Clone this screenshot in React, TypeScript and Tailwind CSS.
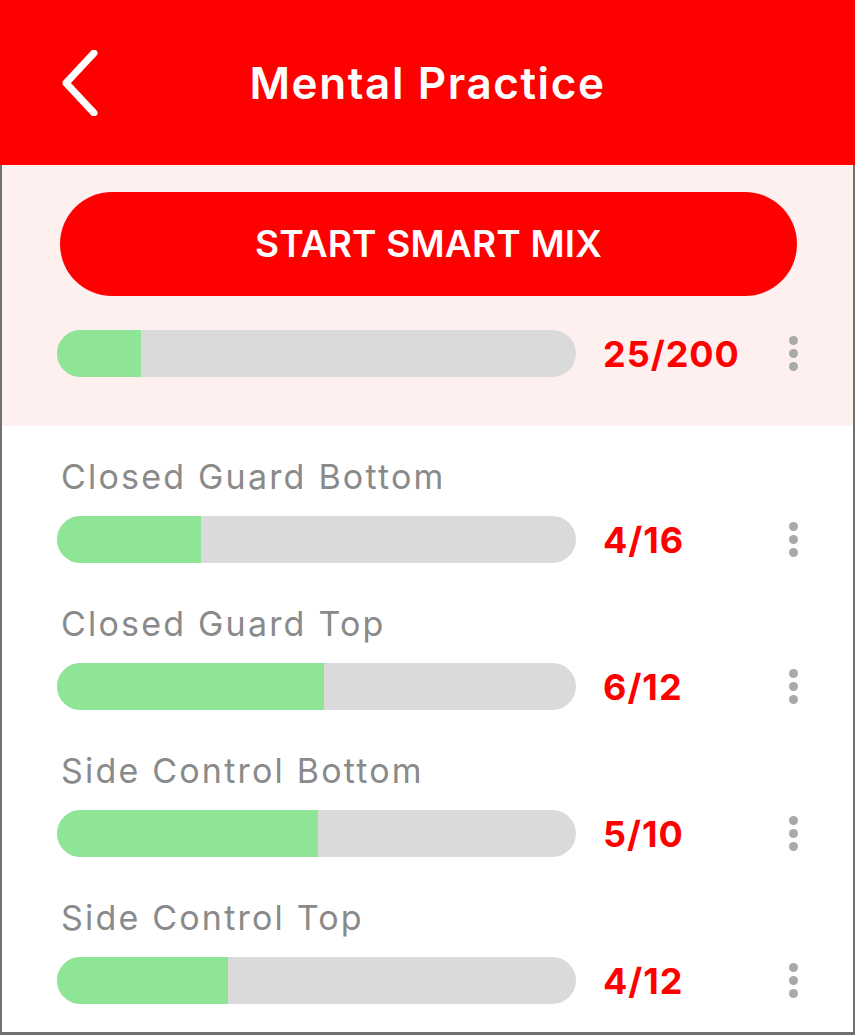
const items = [
  { name: 'Closed Guard Bottom', done: 4, total: 16, fill: 144 },
  { name: 'Closed Guard Top', done: 6, total: 12, fill: 267 },
  { name: 'Side Control Bottom', done: 5, total: 10, fill: 261 },
  { name: 'Side Control Top', done: 4, total: 12, fill: 171 },
];

const Dots = () => (
  <div className="flex flex-col items-center gap-[4px] w-[10px]">
    <span className="block w-[9px] h-[9px] rounded-full bg-[#a9a9a9]" />
    <span className="block w-[9px] h-[9px] rounded-full bg-[#a9a9a9]" />
    <span className="block w-[9px] h-[9px] rounded-full bg-[#a9a9a9]" />
  </div>
);

const ProgressRow = ({ fill, label }: { fill: number; label: string }) => (
  <div className="flex items-center h-[47px]">
    <div className="w-[519px] h-[47px] rounded-full bg-[#dadada] overflow-hidden">
      <div className="h-full bg-[#8ee596]" style={{ width: fill }} />
    </div>
    <div className="flex-1 pl-[27px] text-[#ff0000] font-bold text-[36px] leading-none tracking-[1px]">
      {label}
    </div>
    <Dots />
  </div>
);

export default function App() {
  return (
    <div className="w-[855px] h-[1035px] flex flex-col bg-white" style={{ fontFamily: 'Inter, "Noto Sans", sans-serif' }}>
      <header className="h-[165px] bg-[#ff0000] flex items-center pl-[60px] pr-[60px] shrink-0">
        <svg width="40" height="66" viewBox="0 0 40 66" className="shrink-0">
          <path d="M34 3 L6 33 L34 63" fill="none" stroke="white" strokeWidth="7" strokeLinecap="round" strokeLinejoin="round" />
        </svg>
        <h1 className="flex-1 text-center text-white font-semibold text-[44px] leading-none tracking-[1.6px]">Mental Practice</h1>
        <div className="w-[40px] shrink-0" />
      </header>

      <div className="flex-1 flex flex-col border-x-2 border-b-[3px] border-[#707070]">
        <section className="bg-[#fff0f0] pt-[27px] pb-[49px] pl-[55px] pr-[55px]">
          <button className="ml-[3px] w-[737px] h-[104px] rounded-full bg-[#ff0000] text-white font-semibold text-[37px] tracking-[0.2px]">
            START SMART MIX
          </button>
          <div className="mt-[34px]">
            <ProgressRow fill={84} label="25/200" />
          </div>
        </section>

        <section className="flex flex-col gap-[41px] pt-[31px] pl-[55px] pr-[55px]">
          {items.map((it) => (
            <div key={it.name}>
              <div className="h-[40px] leading-[40px] text-[34px] tracking-[2.2px] text-[#8a8a8a] pl-[4px]">{it.name}</div>
              <div className="mt-[19px]">
                <ProgressRow fill={it.fill} label={`${it.done}/${it.total}`} />
              </div>
            </div>
          ))}
        </section>
      </div>
    </div>
  );
}
